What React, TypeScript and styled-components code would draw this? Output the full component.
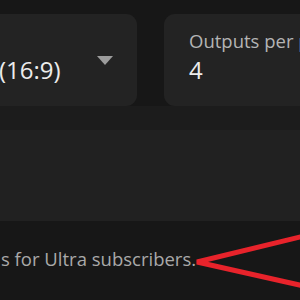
import React from "react";
import styled, { createGlobalStyle } from "styled-components";

const Global = createGlobalStyle`
  html, body { margin: 0; padding: 0; background: #171717; }
  body { width: 300px; height: 300px; overflow: hidden; font-family: "Open Sans", "Liberation Sans", sans-serif; }
`;

const Page = styled.div`
  position: relative;
  width: 300px;
  height: 300px;
  overflow: hidden;
  display: flex;
  flex-direction: column;
`;

const CardRow = styled.div`
  display: flex;
  gap: 27px;
  padding-top: 14px;
  margin-left: -152px;
`;

const Card = styled.div<{ $w: number }>`
  flex: 0 0 ${(p) => p.$w}px;
  height: 92px;
  box-sizing: border-box;
  background: #232323;
  border-radius: 11px;
  padding: 17px 24px 0 25px;
  display: flex;
  align-items: center;
  justify-content: space-between;
`;

const Field = styled.div`
  display: flex;
  flex-direction: column;
  gap: 5px;
  align-self: flex-start;
`;

const Label = styled.div`
  font-size: 18.5px;
  line-height: 20px;
  font-weight: 500;
  color: #b4b4b4;
  white-space: nowrap;
`;

const Value = styled.div`
  font-size: 24px;
  line-height: 28px;
  font-weight: 500;
  color: #ececec;
  white-space: nowrap;
`;

const Caret = styled.svg`
  width: 16px;
  height: 9px;
  margin-top: -17px;
  flex: none;
`;

const Spacer = styled.div`
  height: 24px;
  background: #1c1c1c;
`;

const Panel = styled.div`
  height: 91px;
  background: #212121;
`;

const Note = styled.p`
  margin: 0;
  padding: 26px 0 0 1px;
  font-size: 18.5px;
  line-height: 24px;
  font-weight: 500;
  color: #a9a9a9;
  white-space: nowrap;
`;

const Arrow = styled.svg`
  position: absolute;
  left: 0;
  top: 0;
  width: 300px;
  height: 300px;
  pointer-events: none;
`;

export default function App() {
  return (
    <Page>
      <Global />
      <CardRow>
        <Card $w={289}>
          <Field>
            <Label>Aspect Ratio</Label>
            <Value>Landscape (16:9)</Value>
          </Field>
          <Caret viewBox="0 0 16 9">
            <path d="M0 0 H16 L8 9 Z" fill="#9c9c9c" />
          </Caret>
        </Card>
        <Card $w={289}>
          <Field>
            <Label>Outputs per prompt</Label>
            <Value>4</Value>
          </Field>
        </Card>
      </CardRow>
      <Spacer />
      <Panel />
      <Note>s for Ultra subscribers.</Note>
      <Arrow viewBox="0 0 300 300">
        <polyline
          points="304,236 197,262 304,286"
          fill="none"
          stroke="#e8232b"
          strokeWidth="5"
          strokeLinejoin="miter"
        />
      </Arrow>
    </Page>
  );
}
